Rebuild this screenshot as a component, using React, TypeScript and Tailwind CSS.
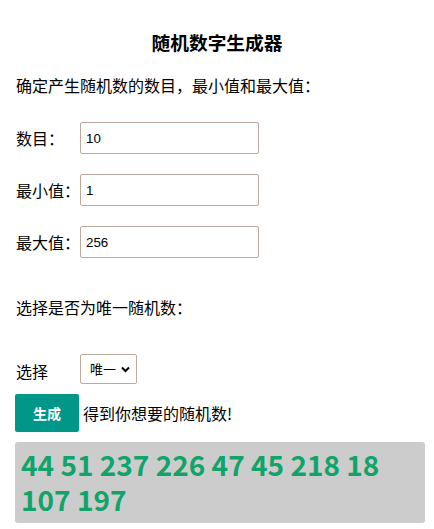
import React from "react";

const cjk = { fontFamily: '"Noto Sans CJK SC", "Noto Sans", sans-serif' };
const arial = { fontFamily: '"Liberation Sans", Arial, "Noto Sans CJK SC", sans-serif' };

export default function App() {
  return (
    <div className="w-[434px] h-[529px] bg-white text-black px-[15px]" style={cjk}>
      <h3 className="pt-[30px] text-center text-[18.72px] leading-[24px] font-bold">随机数字生成器</h3>
      <p className="mt-[19px] pl-px text-[16px] leading-[24px]">确定产生随机数的数目，最小值和最大值：</p>

      <div className="mt-[25px] flex flex-col gap-[20px]">
        {[
          ["数目：", "10"],
          ["最小值：", "1"],
          ["最大值：", "256"],
        ].map(([label, val]) => (
          <div key={label} className="flex items-center">
            <span className="w-[65px] pl-px text-[16px] leading-[24px]">{label}</span>
            <input
              defaultValue={val}
              className="w-[179px] h-[32px] border border-[#bda99d] rounded-[2px] px-[5px] text-[13.33px] text-black outline-none"
              style={arial}
            />
          </div>
        ))}
      </div>

      <p className="mt-[37px] pl-px text-[16px] leading-[24px]">选择是否为唯一随机数：</p>

      <div className="mt-[35px] flex items-center">
        <span className="w-[65px] pl-px text-[16px] leading-[24px] mt-[3px]">选择</span>
        <div className="w-[57px] h-[30px] border border-[#bda99d] rounded-[2px] flex items-center pl-[9px] pr-[6px] justify-between text-[13px]">
          <span className="whitespace-nowrap">唯一</span>
          <svg className="shrink-0" width="9" height="7" viewBox="0 0 9 7">
            <path d="M1 1.5 L4.5 5 L8 1.5" fill="none" stroke="#000" strokeWidth="2" />
          </svg>
        </div>
      </div>

      <div className="mt-[10px] flex items-center">
        <button className="w-[64px] h-[38px] bg-[#009688] text-white text-[14px] font-bold rounded-[2px]">生成</button>
        <span className="ml-[4px] text-[16px]">得到你想要的随机数!</span>
      </div>

      <div className="mt-[10px] w-[410px] h-[81px] bg-[#cccccc] rounded-[3px] pl-[6px] pt-[5px] text-[#10a36a] text-[28px] leading-[35px] font-bold">
        44 51 237 226 47 45 218 18 107 197
      </div>
    </div>
  );
}
